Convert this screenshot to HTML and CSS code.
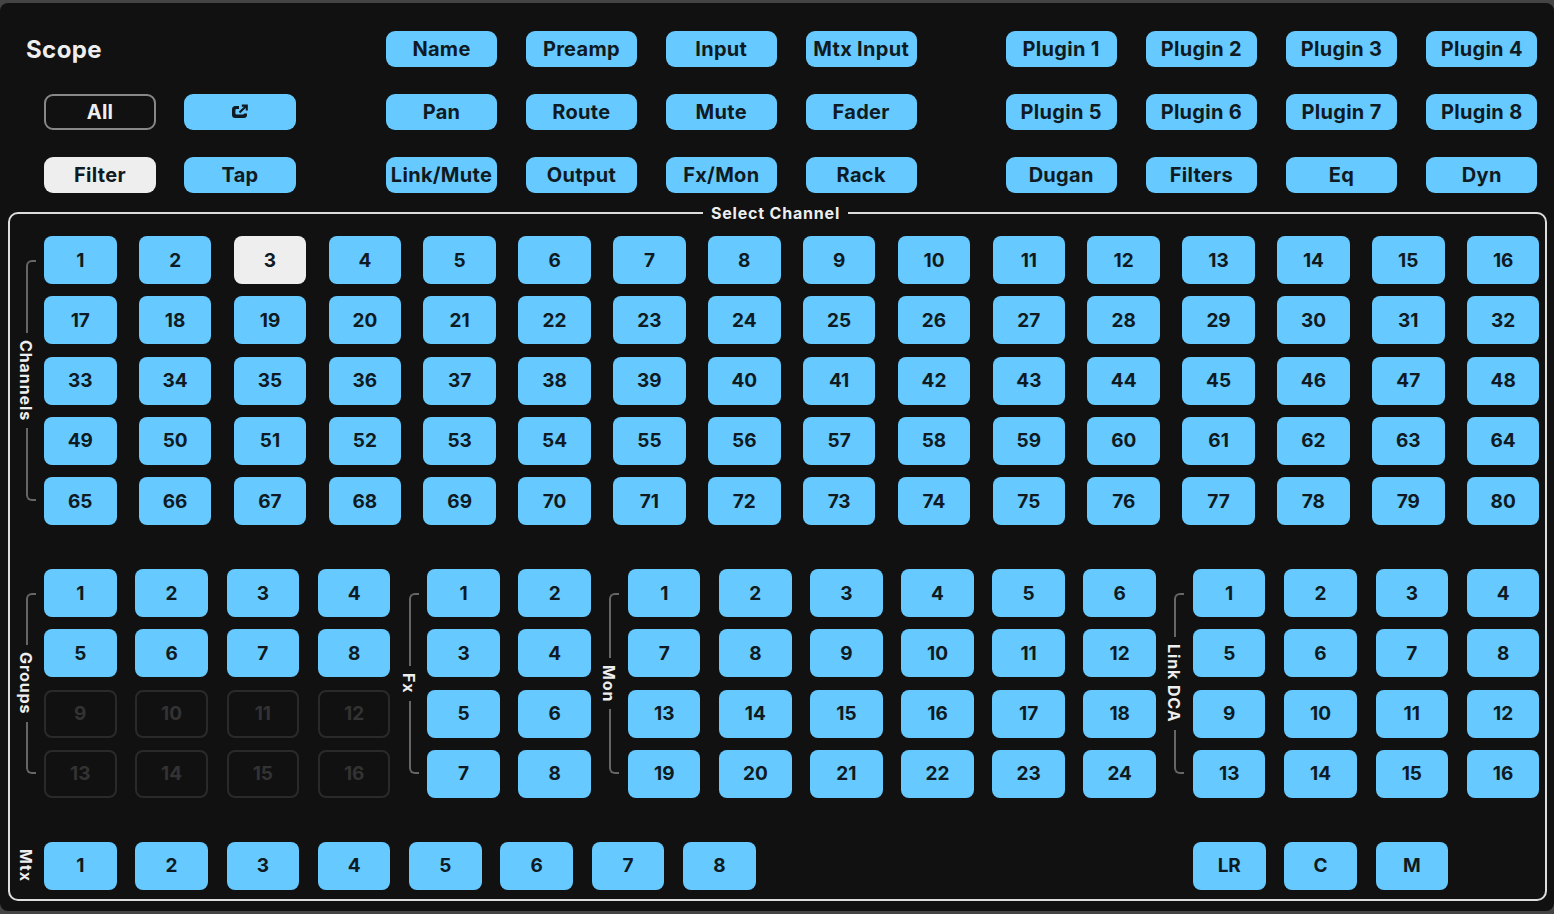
FILE: index.html
```html
<!doctype html>
<html lang="en">
  <head>
    <meta charset="UTF-8" />
    <meta name="viewport" content="width=device-width, initial-scale=1.0" />
    <title>Scope</title>
    <link rel="stylesheet" href="styles.css">
  </head>
  <body>
    <div class="panel">
      <div class="scope-bar">
        <div class="scope-left">
          <h1 class="scope-title">Scope</h1>
          <button class="pill outline">All</button>
          <button class="pill" aria-label="Pop out">
            <svg class="popout-icon" viewBox="0 0 18 16" width="18" height="16">
              <path d="M8 2H4.5A3.5 3.5 0 0 0 1 5.5v5.2A3.3 3.3 0 0 0 4.3 14h8.4a3.3 3.3 0 0 0 3.3-3.3V9.5h-2.4a1.2 1.2 0 0 0-1.2 1H5.6a1.2 1.2 0 0 1-1.2-1.2V6.3a1.2 1.2 0 0 1 1.2-1.2H8z" fill="#0f1a22"/>
              <path d="M8.5 8.6 15 2.2M10.8 1.6h5v5" fill="none" stroke="#0f1a22" stroke-width="2.1"/>
            </svg>
          </button>
          <button class="pill active">Filter</button>
          <button class="pill">Tap</button>
        </div>

        <div class="scope-grid first">
          <button class="pill">Name</button>
          <button class="pill">Preamp</button>
          <button class="pill">Input</button>
          <button class="pill">Mtx Input</button>
          <button class="pill">Pan</button>
          <button class="pill">Route</button>
          <button class="pill">Mute</button>
          <button class="pill">Fader</button>
          <button class="pill">Link/Mute</button>
          <button class="pill">Output</button>
          <button class="pill">Fx/Mon</button>
          <button class="pill">Rack</button>
        </div>

        <div class="scope-grid second">
          <button class="pill">Plugin 1</button>
          <button class="pill">Plugin 2</button>
          <button class="pill">Plugin 3</button>
          <button class="pill">Plugin 4</button>
          <button class="pill">Plugin 5</button>
          <button class="pill">Plugin 6</button>
          <button class="pill">Plugin 7</button>
          <button class="pill">Plugin 8</button>
          <button class="pill">Dugan</button>
          <button class="pill">Filters</button>
          <button class="pill">Eq</button>
          <button class="pill">Dyn</button>
        </div>
      </div>

      <fieldset class="select-channel">
        <legend>Select Channel</legend>

        <div class="row channels-row">
          <div class="side bracket"><span>Channels</span></div>
          <div class="channels">
            <button class="key">1</button>
            <button class="key">2</button>
            <button class="key active">3</button>
            <button class="key">4</button>
            <button class="key">5</button>
            <button class="key">6</button>
            <button class="key">7</button>
            <button class="key">8</button>
            <button class="key">9</button>
            <button class="key">10</button>
            <button class="key">11</button>
            <button class="key">12</button>
            <button class="key">13</button>
            <button class="key">14</button>
            <button class="key">15</button>
            <button class="key">16</button>
            <button class="key">17</button>
            <button class="key">18</button>
            <button class="key">19</button>
            <button class="key">20</button>
            <button class="key">21</button>
            <button class="key">22</button>
            <button class="key">23</button>
            <button class="key">24</button>
            <button class="key">25</button>
            <button class="key">26</button>
            <button class="key">27</button>
            <button class="key">28</button>
            <button class="key">29</button>
            <button class="key">30</button>
            <button class="key">31</button>
            <button class="key">32</button>
            <button class="key">33</button>
            <button class="key">34</button>
            <button class="key">35</button>
            <button class="key">36</button>
            <button class="key">37</button>
            <button class="key">38</button>
            <button class="key">39</button>
            <button class="key">40</button>
            <button class="key">41</button>
            <button class="key">42</button>
            <button class="key">43</button>
            <button class="key">44</button>
            <button class="key">45</button>
            <button class="key">46</button>
            <button class="key">47</button>
            <button class="key">48</button>
            <button class="key">49</button>
            <button class="key">50</button>
            <button class="key">51</button>
            <button class="key">52</button>
            <button class="key">53</button>
            <button class="key">54</button>
            <button class="key">55</button>
            <button class="key">56</button>
            <button class="key">57</button>
            <button class="key">58</button>
            <button class="key">59</button>
            <button class="key">60</button>
            <button class="key">61</button>
            <button class="key">62</button>
            <button class="key">63</button>
            <button class="key">64</button>
            <button class="key">65</button>
            <button class="key">66</button>
            <button class="key">67</button>
            <button class="key">68</button>
            <button class="key">69</button>
            <button class="key">70</button>
            <button class="key">71</button>
            <button class="key">72</button>
            <button class="key">73</button>
            <button class="key">74</button>
            <button class="key">75</button>
            <button class="key">76</button>
            <button class="key">77</button>
            <button class="key">78</button>
            <button class="key">79</button>
            <button class="key">80</button>
          </div>
        </div>

        <div class="row groups-row">
          <div class="side bracket"><span>Groups</span></div>
          <div class="keys cols-4">
            <button class="key">1</button>
            <button class="key">2</button>
            <button class="key">3</button>
            <button class="key">4</button>
            <button class="key">5</button>
            <button class="key">6</button>
            <button class="key">7</button>
            <button class="key">8</button>
            <button class="key off" disabled>9</button>
            <button class="key off" disabled>10</button>
            <button class="key off" disabled>11</button>
            <button class="key off" disabled>12</button>
            <button class="key off" disabled>13</button>
            <button class="key off" disabled>14</button>
            <button class="key off" disabled>15</button>
            <button class="key off" disabled>16</button>
          </div>

          <div class="side bracket"><span>Fx</span></div>
          <div class="keys cols-2">
            <button class="key">1</button>
            <button class="key">2</button>
            <button class="key">3</button>
            <button class="key">4</button>
            <button class="key">5</button>
            <button class="key">6</button>
            <button class="key">7</button>
            <button class="key">8</button>
          </div>

          <div class="side bracket"><span>Mon</span></div>
          <div class="keys cols-6">
            <button class="key">1</button>
            <button class="key">2</button>
            <button class="key">3</button>
            <button class="key">4</button>
            <button class="key">5</button>
            <button class="key">6</button>
            <button class="key">7</button>
            <button class="key">8</button>
            <button class="key">9</button>
            <button class="key">10</button>
            <button class="key">11</button>
            <button class="key">12</button>
            <button class="key">13</button>
            <button class="key">14</button>
            <button class="key">15</button>
            <button class="key">16</button>
            <button class="key">17</button>
            <button class="key">18</button>
            <button class="key">19</button>
            <button class="key">20</button>
            <button class="key">21</button>
            <button class="key">22</button>
            <button class="key">23</button>
            <button class="key">24</button>
          </div>

          <div class="side bracket"><span>Link DCA</span></div>
          <div class="keys cols-4">
            <button class="key">1</button>
            <button class="key">2</button>
            <button class="key">3</button>
            <button class="key">4</button>
            <button class="key">5</button>
            <button class="key">6</button>
            <button class="key">7</button>
            <button class="key">8</button>
            <button class="key">9</button>
            <button class="key">10</button>
            <button class="key">11</button>
            <button class="key">12</button>
            <button class="key">13</button>
            <button class="key">14</button>
            <button class="key">15</button>
            <button class="key">16</button>
          </div>
        </div>

        <div class="row mtx-row">
          <div class="side"><span>Mtx</span></div>
          <div class="keys cols-8">
            <button class="key">1</button>
            <button class="key">2</button>
            <button class="key">3</button>
            <button class="key">4</button>
            <button class="key">5</button>
            <button class="key">6</button>
            <button class="key">7</button>
            <button class="key">8</button>
          </div>
          <div class="keys cols-4 mains">
            <button class="key">LR</button>
            <button class="key">C</button>
            <button class="key">M</button>
          </div>
        </div>
      </fieldset>
    </div>
  </body>
</html>
```

FILE: styles.css
```css
* {
  margin: 0;
  padding: 0;
  box-sizing: border-box;
}

body {
  font-family: Inter, "Liberation Sans", sans-serif;
  height: 100vh;
  background: #444;
  padding: 3px 0;
  overflow: hidden;
}

button {
  font-family: inherit;
  border: none;
  background: #66c9ff;
  color: #0f1a22;
  font-weight: 700;
}

.panel {
  height: 908px;
  background: #111;
  border-radius: 8px;
}

/* top buttons */
.scope-bar {
  display: flex;
  padding: 28px 17px 0 44px;
}

.scope-left {
  display: grid;
  grid-template-columns: 112px 112px;
  grid-template-rows: repeat(3, 36px);
  gap: 27px 28px;
}

.scope-title {
  grid-column: 1 / -1;
  margin-left: -18px;
  color: #eee;
  font-size: 24px;
  font-weight: 700;
  line-height: 38px;
  letter-spacing: 0.4px;
}

.scope-grid {
  display: grid;
  grid-template-columns: repeat(4, 111px);
  grid-template-rows: repeat(3, 36px);
  gap: 27px 28.9px;
}

.scope-grid.first {
  margin-left: 90px;
}

.scope-grid.second {
  margin-left: 89px;
  column-gap: 29.2px;
}

.pill {
  border-radius: 9px;
  font-size: 20px;
  letter-spacing: 0.3px;
  display: flex;
  align-items: center;
  justify-content: center;
  white-space: nowrap;
}

.pill.outline {
  background: #111;
  color: #eee;
  border: 2px solid #888;
}

.pill.active,
.key.active {
  background: #eee;
}

/* select channel box */
.select-channel {
  margin: 11px 7px 0 8px;
  padding: 14px 6px 9px 7px;
  border: 2px solid #ddd;
  border-radius: 10px;
}

.select-channel legend {
  margin-left: 686px;
  padding: 0 8px;
  color: #eee;
  font-size: 16px;
  font-weight: 700;
  line-height: 18px;
  letter-spacing: 0.8px;
}

.row {
  display: flex;
}

.groups-row,
.mtx-row {
  margin-top: 44px;
}

.side {
  width: 18px;
  margin: 0 9.5px;
  flex-shrink: 0;
  display: flex;
  flex-direction: column;
  align-items: center;
  justify-content: center;
  color: #eee;
  font-size: 16px;
  font-weight: 700;
  letter-spacing: 0.9px;
}

.side:first-child {
  margin-left: 0;
  margin-right: 9px;
}

.side span {
  writing-mode: vertical-rl;
  white-space: nowrap;
  line-height: 18px;
}

.bracket {
  margin-top: 24px;
  margin-bottom: 24px;
  gap: 7px;
}

.bracket::before,
.bracket::after {
  content: "";
  flex: 1;
  align-self: flex-start;
  width: 8px;
  margin-left: 9px;
  border-left: 2px solid #666;
}

.bracket::before {
  border-top: 2px solid #666;
  border-top-left-radius: 6px;
}

.bracket::after {
  border-bottom: 2px solid #666;
  border-bottom-left-radius: 6px;
}

.channels {
  display: grid;
  grid-template-columns: repeat(16, 72.5px);
  grid-auto-rows: 48px;
  gap: 12.25px 22.37px;
}

.keys {
  display: grid;
  grid-auto-rows: 48px;
  gap: 12.25px 18.8px;
}

.cols-2 {
  grid-template-columns: repeat(2, 72.5px);
  column-gap: 18.6px;
}

.cols-4 {
  grid-template-columns: repeat(4, 72.5px);
}

.cols-6 {
  grid-template-columns: repeat(6, 72.5px);
  column-gap: 18.6px;
}

.cols-8 {
  grid-template-columns: repeat(8, 72.5px);
}

.mains {
  margin-left: auto;
}

.key {
  border-radius: 8px;
  font-size: 19px;
}

.key.off {
  background: #111;
  color: #333;
  border: 2px solid #2a2a2a;
}
```
